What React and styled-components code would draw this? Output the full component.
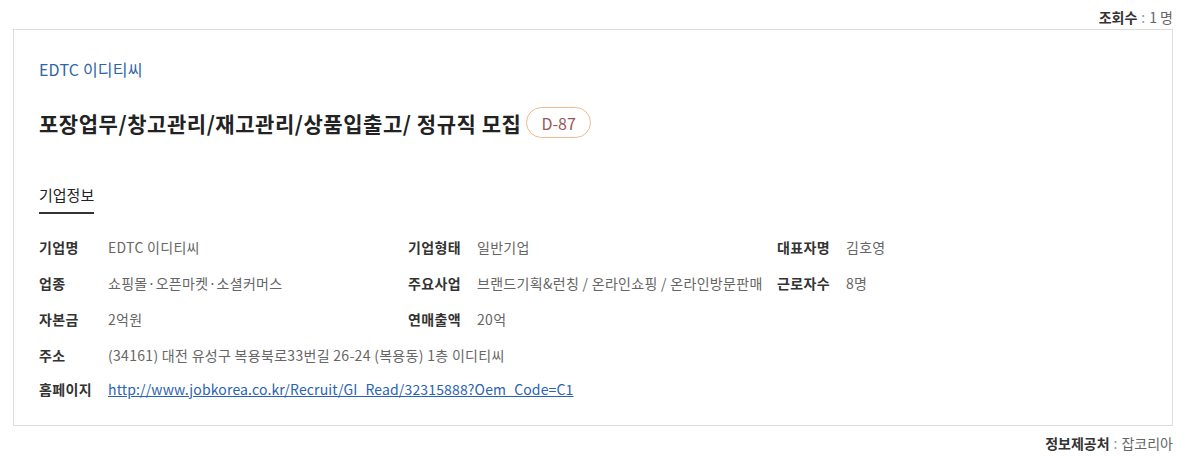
import React from 'react';
import styled, {createGlobalStyle} from 'styled-components';

const GlobalStyle = createGlobalStyle`
  body {
    margin: 0;
    background: #fff;
    font-family: "Noto Sans CJK KR", "Noto Sans", sans-serif;
    color: #333;
  }
`

const Page = styled.div`
  padding: 0 14px 0 13px;
`

const MetaLine = styled.div`
  display: flex;
  justify-content: flex-end;
  font-size: 14px;
  line-height: 18px;
  color: #666;
  padding: ${props => props.top ? "8px 0 3px" : "8px 0"};
  b {
    color: #333;
    font-weight: 700;
  }
  i {
    font-style: normal;
    color: #999;
    margin: 0 4px;
  }
`

const Card = styled.div`
  border: 1px solid #ddd;
  padding: 29px 25px 26px;
`

const Company = styled.div`
  font-size: 16px;
  line-height: 20px;
  color: #2d65a8;
  letter-spacing: 0.2px;
`

const TitleRow = styled.div`
  display: flex;
  align-items: center;
  gap: 5px;
  margin-top: 28px;
  height: 31px;
`

const Title = styled.h2`
  margin: 0;
  font-size: 21px;
  font-weight: 700;
  color: #222;
  letter-spacing: 0.55px;
`

const Badge = styled.span`
  display: inline-flex;
  align-items: center;
  height: 31px;
  box-sizing: border-box;
  padding: 0 14px;
  border: 1px solid #f2b98e;
  border-radius: 16px;
  font-size: 16px;
  color: #9a5757;
`

const Tab = styled.div`
  display: inline-block;
  margin-top: 47px;
  font-size: 15px;
  line-height: 20px;
  color: #222;
  padding-bottom: 7px;
  border-bottom: 2px solid #333;
`

const InfoGrid = styled.div`
  display: grid;
  grid-template-columns: repeat(3, 369px);
  margin-top: 15px;
`

const Item = styled.div`
  display: flex;
  grid-column: ${props => props.full ? "1 / -1" : "auto"};
  padding: ${props => props.tight ? "6px 0 0" : "8px 0"};
  font-size: 14px;
  line-height: 20px;
  white-space: nowrap;
`

const Label = styled.span`
  flex: 0 0 69px;
  font-weight: 700;
  color: #333;
  letter-spacing: 0.4px;
`

const Value = styled.span`
  color: #666;
  font-size: 14px;
  letter-spacing: 0.3px;
`

const Link = styled.a`
  color: #2a63b0;
  font-size: 14px;
  letter-spacing: 0.15px;
  text-decoration: underline;
`

const info = [
  ["기업명", "EDTC 이디티씨"],
  ["기업형태", "일반기업"],
  ["대표자명", "김호영"],
  ["업종", "쇼핑몰·오픈마켓·소셜커머스"],
  ["주요사업", "브랜드기획&런칭 / 온라인쇼핑 / 온라인방문판매"],
  ["근로자수", "8명"],
  ["자본금", "2억원"],
  ["연매출액", "20억"],
]

export default function App() {
  return (
    <>
      <GlobalStyle />
      <Page>
        <MetaLine top><b>조회수</b><i>:</i>1 명</MetaLine>
        <Card>
          <Company>EDTC 이디티씨</Company>
          <TitleRow>
            <Title>포장업무/창고관리/재고관리/상품입출고/ 정규직 모집</Title>
            <Badge>D-87</Badge>
          </TitleRow>
          <Tab>기업정보</Tab>
          <InfoGrid>
            {info.map(([k, v]) => (
              <Item key={k}>
                <Label>{k}</Label>
                <Value>{v}</Value>
              </Item>
            ))}
            <Item full>
              <Label>주소</Label>
              <Value>(34161) 대전 유성구 복용북로33번길 26-24 (복용동) 1층 이디티씨</Value>
            </Item>
            <Item full tight>
              <Label>홈페이지</Label>
              <Link href="#">http://www.jobkorea.co.kr/Recruit/GI_Read/32315888?Oem_Code=C1</Link>
            </Item>
          </InfoGrid>
        </Card>
        <MetaLine><b>정보제공처</b><i>:</i>잡코리아</MetaLine>
      </Page>
    </>
  );
}
